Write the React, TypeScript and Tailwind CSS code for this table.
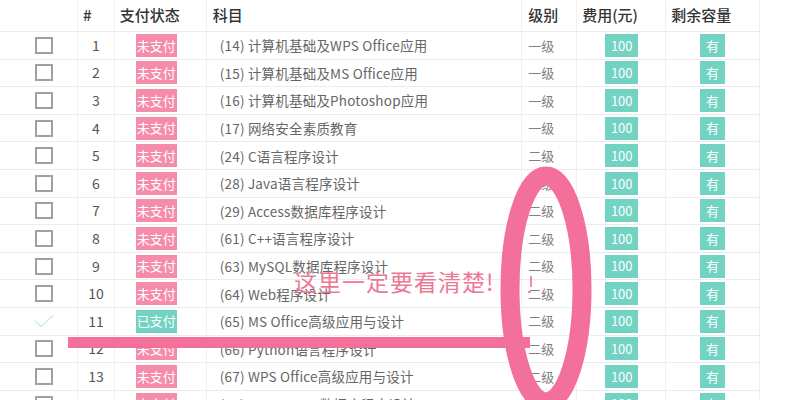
import React from 'react'

type Row = {
  no: number
  paid: boolean
  subject: string
  level: string
}

const rows: Row[] = [
  { no: 1, paid: false, subject: '(14) 计算机基础及WPS Office应用', level: '一级' },
  { no: 2, paid: false, subject: '(15) 计算机基础及MS Office应用', level: '一级' },
  { no: 3, paid: false, subject: '(16) 计算机基础及Photoshop应用', level: '一级' },
  { no: 4, paid: false, subject: '(17) 网络安全素质教育', level: '一级' },
  { no: 5, paid: false, subject: '(24) C语言程序设计', level: '二级' },
  { no: 6, paid: false, subject: '(28) Java语言程序设计', level: '二级' },
  { no: 7, paid: false, subject: '(29) Access数据库程序设计', level: '二级' },
  { no: 8, paid: false, subject: '(61) C++语言程序设计', level: '二级' },
  { no: 9, paid: false, subject: '(63) MySQL数据库程序设计', level: '二级' },
  { no: 10, paid: false, subject: '(64) Web程序设计', level: '二级' },
  { no: 11, paid: true, subject: '(65) MS Office高级应用与设计', level: '二级' },
  { no: 12, paid: false, subject: '(66) Python语言程序设计', level: '二级' },
  { no: 13, paid: false, subject: '(67) WPS Office高级应用与设计', level: '二级' },
  { no: 14, paid: false, subject: '(68) openGauss数据库程序设计', level: '二级' },
]

const cell = 'h-full flex items-center border-r border-[#f0f0f0]'

const App = () => {
  return (
    <div
      className="relative w-[785px] h-[400px] overflow-hidden bg-white"
      style={{ fontFamily: '"Noto Sans CJK SC", "Noto Sans", sans-serif' }}
    >
      <div className="w-[760px] border-r border-[#eeeeee]">
        {/* header */}
        <div className="flex h-[31px] text-[15px] font-medium text-[#333]">
          <div className={`${cell} w-[78px]`} />
          <div className={`${cell} w-[37px] pl-[5px]`}>#</div>
          <div className={`${cell} w-[92px] pl-[5px]`}>支付状态</div>
          <div className={`${cell} w-[316px] pl-[6px]`}>科目</div>
          <div className={`${cell} w-[55px] pl-[6px]`}>级别</div>
          <div className={`${cell} w-[89px] pl-[5px]`}>费用(元)</div>
          <div className="h-full flex items-center w-[93px] pl-[5px]">剩余容量</div>
        </div>

        {rows.map((r) => (
          <div
            key={r.no}
            className="flex h-[27.6px] border-t border-[#ececec] text-[13px] text-[#666]"
          >
            <div className={`${cell} w-[78px] pl-[35px]`}>
              {r.paid ? (
                <svg width="20" height="14" viewBox="0 0 20 14" className="ml-[-1px]">
                  <path d="M1 7 L7 12.5 L19 1.5" fill="none" stroke="#cfe9e3" strokeWidth="1.5" />
                </svg>
              ) : (
                <div className="w-[18px] h-[17px] border-2 border-[#a0a0a0]" />
              )}
            </div>
            <div className={`${cell} w-[37px] justify-center text-[14px] text-[#555]`}>{r.no}</div>
            <div className={`${cell} w-[92px] pl-[21px]`}>
              <span
                className={`h-[23px] w-[41px] flex items-center justify-center text-white text-[13px] ${
                  r.paid ? 'bg-[#72d3c3]' : 'bg-[#f58caa]'
                }`}
              >
                {r.paid ? '已支付' : '未支付'}
              </span>
            </div>
            <div className={`${cell} w-[316px] pl-[13px] text-[13.5px] tracking-[0.2px]`}>{r.subject}</div>
            <div className={`${cell} w-[55px] pl-[6px] text-[#808080]`}>{r.level}</div>
            <div className={`${cell} w-[89px] pl-[28px]`}>
              <span className="h-[23px] w-[33px] flex items-center justify-center bg-[#72d3c3] text-white text-[13px]">
                100
              </span>
            </div>
            <div className="h-full flex items-center w-[93px] pl-[34px]">
              <span className="h-[23px] w-[25px] flex items-center justify-center bg-[#72d3c3] text-white text-[13px]">
                有
              </span>
            </div>
          </div>
        ))}
      </div>

      {/* hand-drawn annotation over the table */}
      <svg className="absolute left-0 top-0 pointer-events-none" width="785" height="400">
        <ellipse cx="546" cy="289" rx="36" ry="113" fill="none" stroke="#f2709a" strokeWidth="19" />
        <path d="M68 342.5 L530 342.5" stroke="#f2709a" strokeWidth="11" />
        <path d="M531 276 L531 287 M528 292 L531 292" stroke="#e86d8d" strokeWidth="1.5" />
      </svg>
      <div className="absolute left-[294px] top-[270px] text-[23px] text-[#ec7895] tracking-[1px] leading-none">
        这里一定要看清楚!
      </div>
    </div>
  )
}

export default App
